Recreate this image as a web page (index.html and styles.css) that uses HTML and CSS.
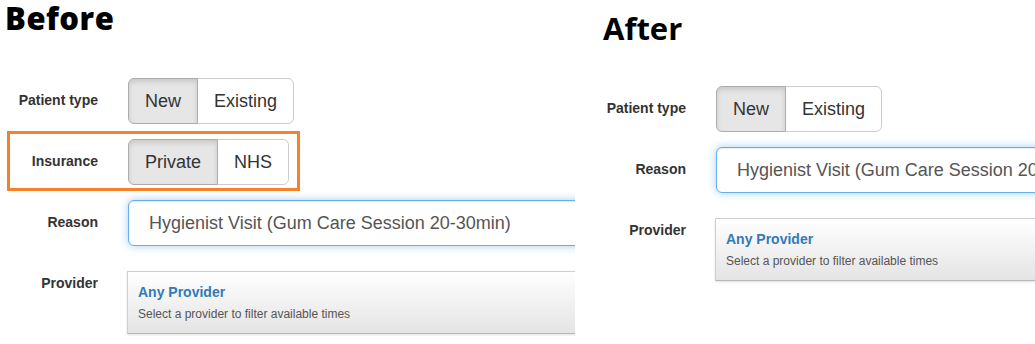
FILE: index.html
```html
<!DOCTYPE html>
<html lang="en">
<head>
<meta charset="utf-8">
<title>Before / After</title>
<link rel="stylesheet" href="styles.css">
</head>
<body>
<div class="page">
  <section class="panel panel-before">
    <h1 class="title title-before">Before</h1>
    <div class="form form-before">
      <div class="row">
        <label class="label">Patient type</label>
        <div class="btn-group">
          <span class="btn active">New</span>
          <span class="btn">Existing</span>
        </div>
      </div>
      <div class="row row-highlight">
        <label class="label">Insurance</label>
        <div class="btn-group">
          <span class="btn active">Private</span>
          <span class="btn">NHS</span>
        </div>
      </div>
      <div class="row row-reason">
        <label class="label">Reason</label>
        <div class="select">Hygienist Visit (Gum Care Session 20-30min)</div>
      </div>
      <div class="row">
        <label class="label label-top">Provider</label>
        <div class="provider">
          <div class="provider-name">Any Provider</div>
          <div class="provider-hint">Select a provider to filter available times</div>
        </div>
      </div>
    </div>
  </section>

  <section class="panel panel-after">
    <h1 class="title title-after">After</h1>
    <div class="form form-after">
      <div class="row">
        <label class="label">Patient type</label>
        <div class="btn-group">
          <span class="btn active">New</span>
          <span class="btn">Existing</span>
        </div>
      </div>
      <div class="row row-reason">
        <label class="label">Reason</label>
        <div class="select">Hygienist Visit (Gum Care Session 20-30min)</div>
      </div>
      <div class="row">
        <label class="label label-top">Provider</label>
        <div class="provider">
          <div class="provider-name">Any Provider</div>
          <div class="provider-hint">Select a provider to filter available times</div>
        </div>
      </div>
    </div>
  </section>
</div>
</body>
</html>
```

FILE: styles.css
```css
html, body {
  margin: 0;
  padding: 0;
  background: #fff;
}

body {
  font-family: "Liberation Sans", Arial, Helvetica, sans-serif;
  color: #333;
}

.page {
  display: flex;
  width: 1035px;
  height: 344px;
  overflow: hidden;
}

.panel {
  flex: none;
  overflow: hidden;
  height: 344px;
}

.panel-before {
  width: 575px;
}

.panel-after {
  margin-left: 13px;
  width: 447px;
}

.title {
  margin: 0;
  font-family: "Open Sans", "DejaVu Sans", sans-serif;
  font-weight: 700;
  color: #000;
  line-height: 36px;
}

.title-before {
  font-size: 31px;
  font-weight: 800;
  letter-spacing: 0.5px;
  padding-left: 5px;
}

.title-after {
  font-size: 31px;
  padding-left: 15px;
  padding-top: 10px;
}

.form-before {
  margin-top: 42px;
}

.form-after {
  margin-top: 40px;
}

.row {
  display: grid;
  grid-template-columns: 98px 580px;
  column-gap: 30px;
  align-items: start;
  margin-bottom: 15px;
}

.row-reason {
  margin-bottom: 25px;
}

.row-highlight {
  position: relative;
}

.row-highlight::after {
  content: "";
  position: absolute;
  left: 7px;
  top: -8px;
  width: 293px;
  height: 60px;
  box-sizing: border-box;
  border: 3px solid #f5822b;
  pointer-events: none;
}

.label {
  display: block;
  text-align: right;
  font-size: 14px;
  font-weight: 700;
  line-height: 20px;
  padding-top: 12px;
  color: #333;
  white-space: nowrap;
}

.label-top {
  padding-top: 2px;
}

.btn-group {
  display: inline-flex;
  justify-self: start;
}

.btn {
  display: block;
  padding: 10px 16px;
  font-size: 18px;
  line-height: 24px;
  color: #333;
  background: #fff;
  border: 1px solid #ccc;
  white-space: nowrap;
}

.btn:first-child {
  border-radius: 6px 0 0 6px;
}

.btn:last-child {
  border-radius: 0 6px 6px 0;
  margin-left: -1px;
}

.btn.active {
  background: #e6e6e6;
  border-color: #adadad;
  box-shadow: inset 0 3px 5px rgba(0, 0, 0, 0.125);
  position: relative;
  z-index: 1;
}

.select {
  box-sizing: border-box;
  height: 46px;
  padding: 10px 20px;
  font-size: 18px;
  line-height: 24px;
  color: #555;
  background: #fff;
  border: 1px solid #66afe9;
  border-radius: 6px;
  box-shadow: inset 0 1px 1px rgba(0, 0, 0, 0.075), 0 0 8px rgba(102, 175, 233, 0.6);
  white-space: nowrap;
  overflow: hidden;
}

.provider {
  box-sizing: border-box;
  height: 63px;
  padding: 10px 10px;
  background: linear-gradient(to bottom, #ffffff 0%, #e4e4e4 100%);
  border: 1px solid #cfcfcf;
  border-bottom-color: #b8b8b8;
  box-shadow: 0 1px 2px rgba(0, 0, 0, 0.12);
  margin-left: -1px;
}

.provider-name {
  font-size: 14px;
  font-weight: 700;
  line-height: 20px;
  color: #337ab7;
}

.provider-hint {
  margin-top: 4px;
  font-size: 12px;
  line-height: 17px;
  color: #555;
  white-space: nowrap;
}
```
